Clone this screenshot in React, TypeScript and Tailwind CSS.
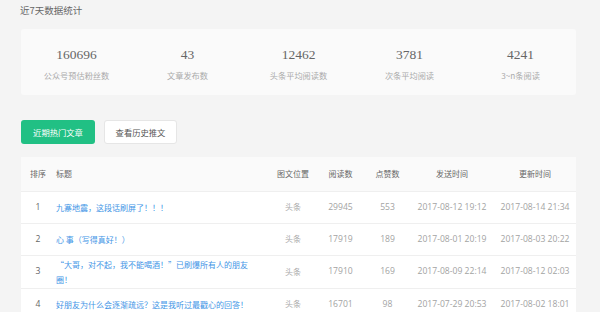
import React from "react";

const stats = [
  { v: "160696", l: "公众号预估粉丝数" },
  { v: "43", l: "文章发布数" },
  { v: "12462", l: "头条平均阅读数" },
  { v: "3781", l: "次条平均阅读" },
  { v: "4241", l: "3~n条阅读" },
];

const rows = [
  { n: "1", t: "九寨地震，这段话刷屏了！！！", p: "头条", r: "29945", z: "553", s: "2017-08-12 19:12", u: "2017-08-14 21:34" },
  { n: "2", t: "心 事（写得真好！）", p: "头条", r: "17919", z: "189", s: "2017-08-01 20:19", u: "2017-08-03 20:22" },
  { n: "3", t: "“大哥，对不起，我不能喝酒！”已刷爆所有人的朋友圈！", p: "头条", r: "17910", z: "169", s: "2017-08-09 22:14", u: "2017-08-12 02:03" },
  { n: "4", t: "好朋友为什么会逐渐疏远？这是我听过最戳心的回答！", p: "头条", r: "16701", z: "98", s: "2017-07-29 20:53", u: "2017-08-02 18:01" },
];

const cjk = { fontFamily: '"Noto Sans CJK SC", "Noto Sans", sans-serif' };
const num = { fontFamily: '"Open Sans", "Noto Sans CJK SC", sans-serif' };

export default function App() {
  return (
    <div className="w-[600px] h-[312px] overflow-hidden bg-[#f4f4f4] pl-[21px] pr-[24px]" style={cjk}>
      <div className="pt-[3px] text-[9.5px] leading-[14px] text-[#666] -ml-px">近7天数据统计</div>

      <div className="mt-[12px] h-[66px] rounded-[3px] bg-[#fafafa] grid grid-cols-5 pt-[18px]">
        {stats.map((s) => (
          <div key={s.l} className="flex flex-col items-center">
            <div className="text-[13.5px] leading-[16px] text-[#666]" style={{ fontFamily: '"Liberation Serif", serif' }}>{s.v}</div>
            <div className="mt-[6px] text-[8.2px] leading-[12px] text-[#aaa]">{s.l}</div>
          </div>
        ))}
      </div>

      <div className="mt-[25px] flex gap-[9px]">
        <div className="w-[74px] h-[24px] rounded-[3px] bg-[#21c084] text-white text-[8.3px] flex items-center justify-center">近期热门文章</div>
        <div className="w-[73px] h-[24px] rounded-[3px] bg-white border border-[#e6e6e6] text-[#555] text-[8.3px] flex items-center justify-center">查看历史推文</div>
      </div>

      <table className="mt-[13px] w-[555px] table-fixed border-collapse bg-white">
        <colgroup>
          <col className="w-[34px]" />
          <col className="w-[215px]" />
          <col className="w-[46px]" />
          <col className="w-[49px]" />
          <col className="w-[45px]" />
          <col className="w-[84px]" />
          <col className="w-[82px]" />
        </colgroup>
        <thead>
          <tr className="h-[34px] bg-[#fafafa] text-[8px] text-[#666] border-b border-[#efefef]">
            <th className="font-normal text-center">排序</th>
            <th className="font-normal text-left pl-px">标题</th>
            <th className="font-normal text-center">图文位置</th>
            <th className="font-normal text-center">阅读数</th>
            <th className="font-normal text-center">点赞数</th>
            <th className="font-normal text-center">发送时间</th>
            <th className="font-normal text-center">更新时间</th>
          </tr>
        </thead>
        <tbody>
          {rows.map((r) => (
            <tr key={r.n} className="h-[32px] border-b border-[#efefef]">
              <td className="text-center text-[8.6px] text-[#666]" style={num}>{r.n}</td>
              <td className="pl-px pr-[17px] py-px text-[8px] leading-[15px] text-[#3f95e6]">{r.t}</td>
              <td className="text-center text-[8px] text-[#aaa]">{r.p}</td>
              <td className="text-center text-[8.6px] text-[#a3a3a3]" style={num}>{r.r}</td>
              <td className="text-center text-[8.6px] text-[#a3a3a3]" style={num}>{r.z}</td>
              <td className="text-center text-[8.6px] text-[#a3a3a3]" style={num}>{r.s}</td>
              <td className="text-center text-[8.6px] text-[#a3a3a3]" style={num}>{r.u}</td>
            </tr>
          ))}
        </tbody>
      </table>
    </div>
  );
}
